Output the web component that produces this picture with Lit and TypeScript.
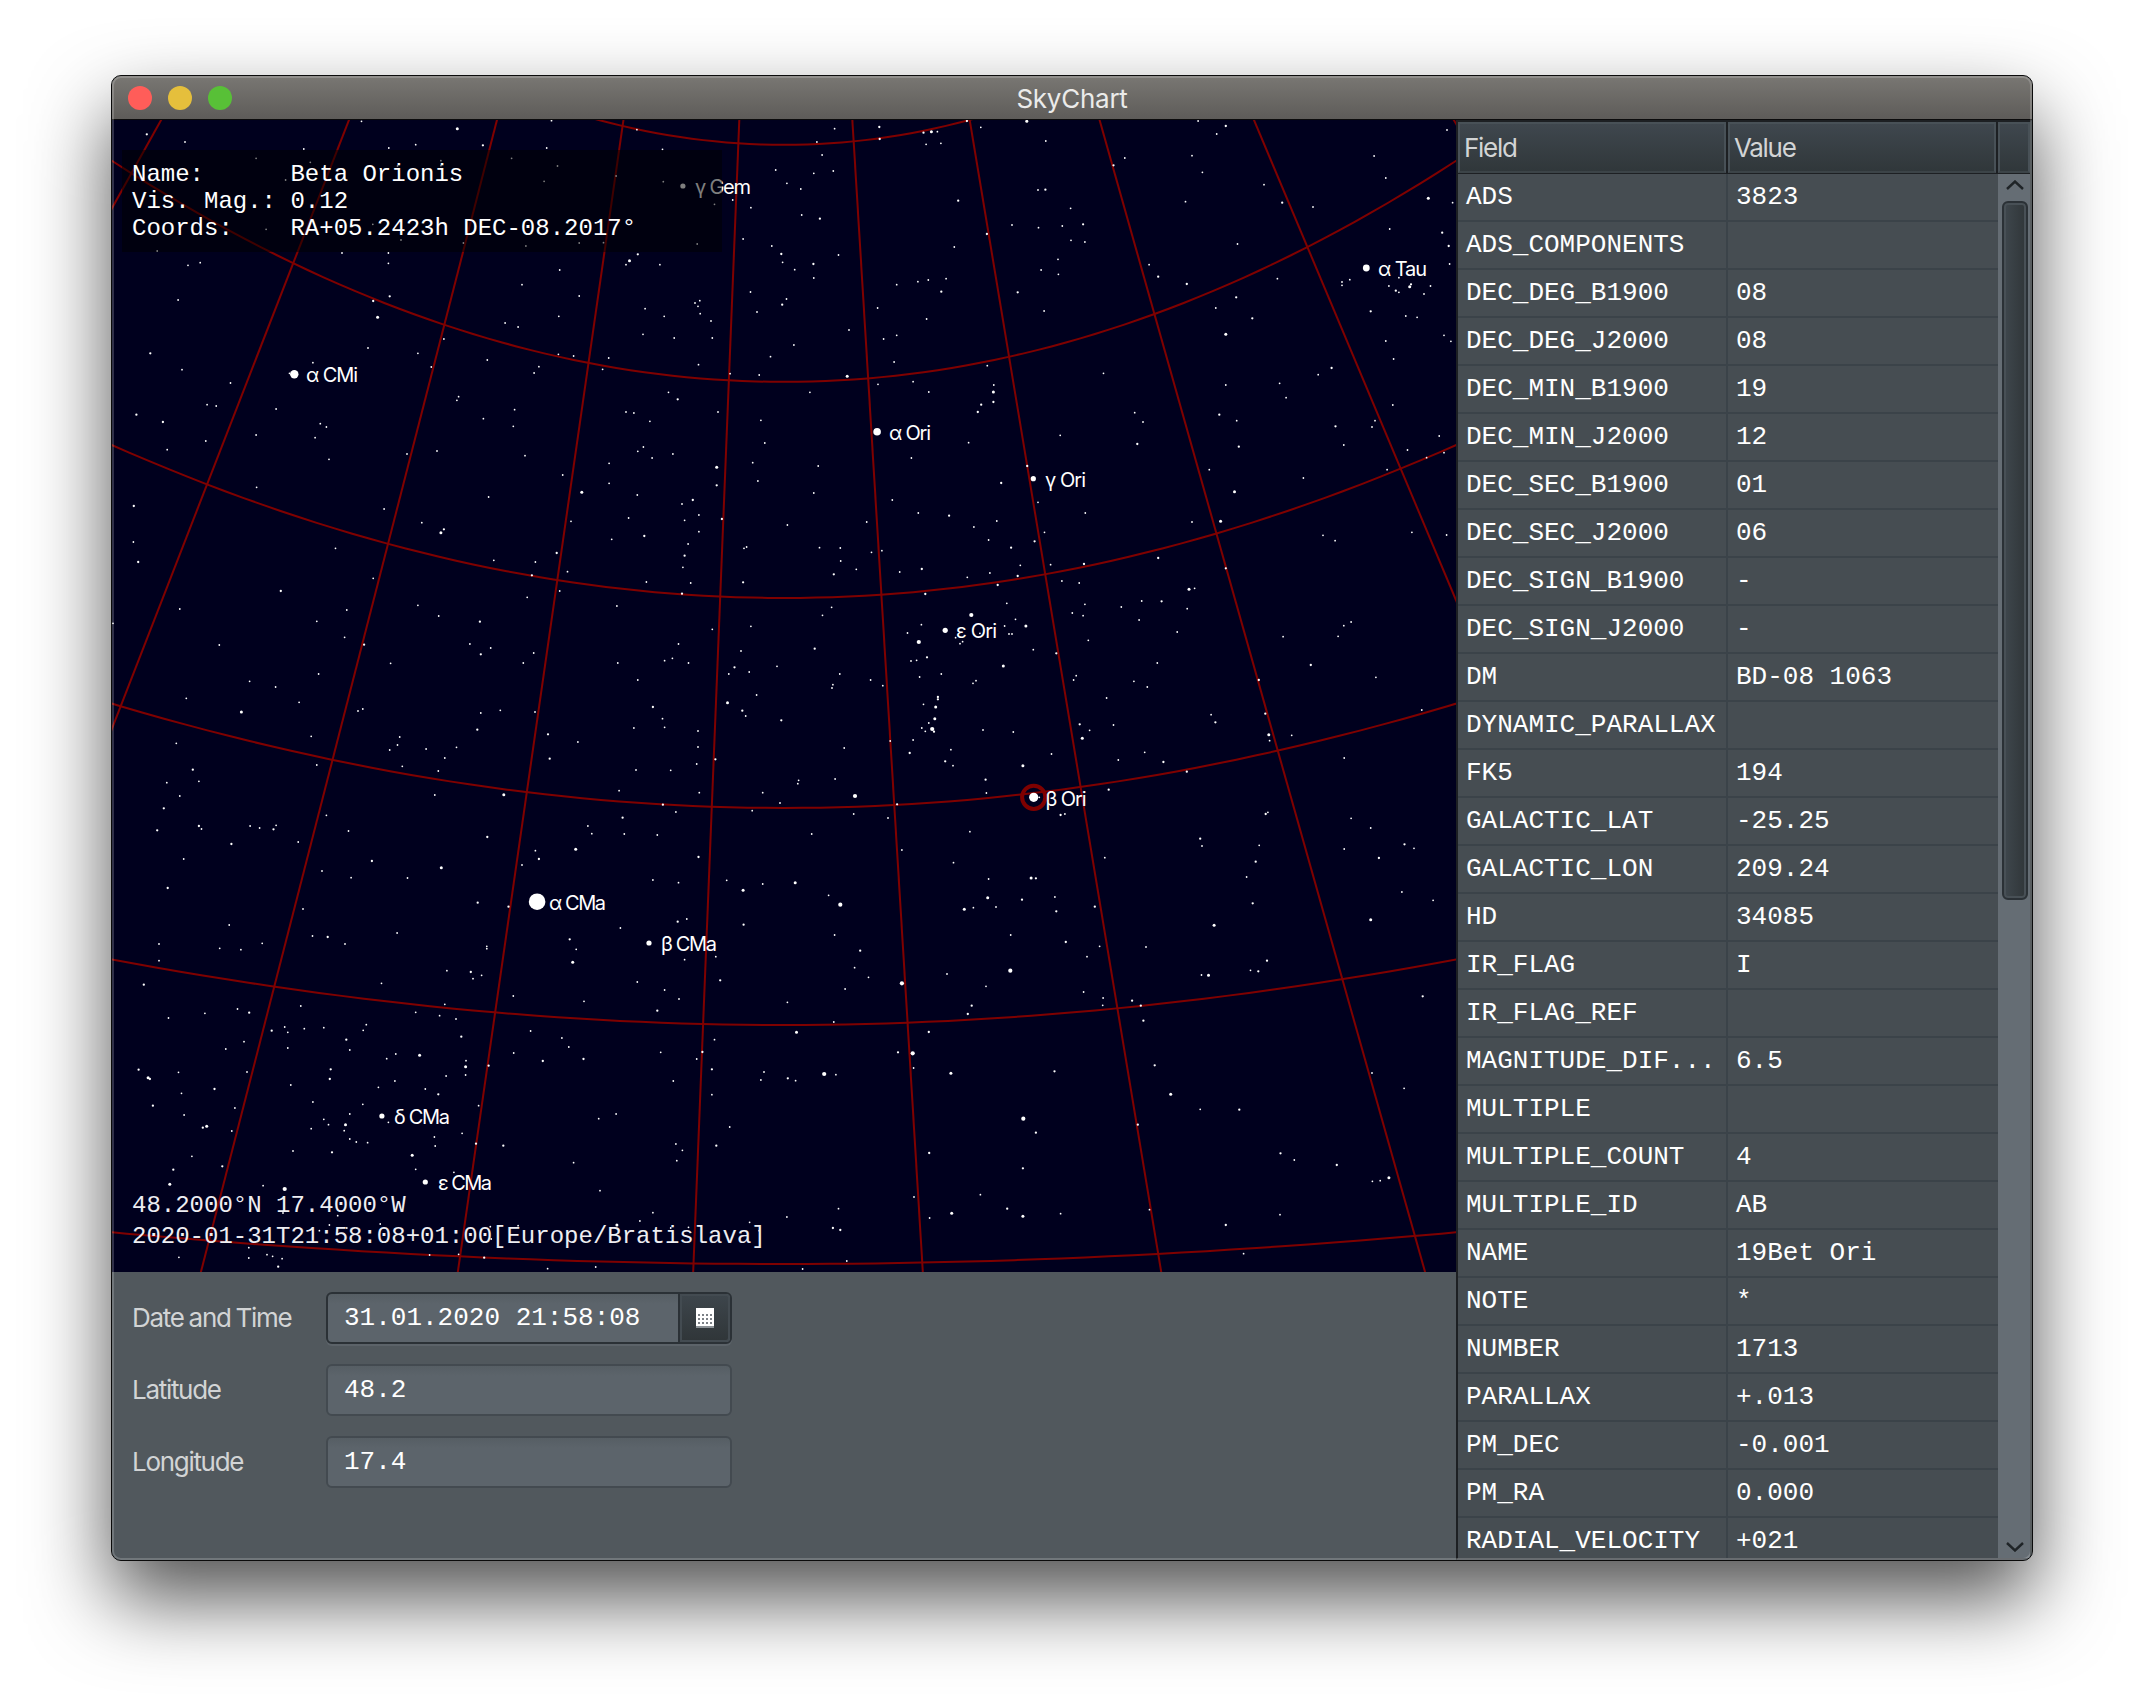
import { LitElement, html, svg, css } from "lit";
import { customElement } from "lit/decorators.js";

/* ---------- Sky data ---------- */

// Each sector lists stars as "x,y" or "x,y,size" in its own survey units.
const UNIT_X = 680 / 1568;
const UNIT_Y = 1 / 3;

const SECTORS: { x: number; y: number; stars: string }[] = [
  {
    x: -12,
    y: -60,
    stars: `108,223,1 196,246 603,184 824,206,2 1041,182 1238,209 470,267 666,264 728,254 883,256,1 1030,264 1297,268 360,295 485,307
    786,302 786,317 686,318 949,295 1055,318 1024,364 1190,348 1299,365 1558,330 428,360 1417,433 1459,420 1501,443 383,508 629,493
    694,540 838,549 982,558 1105,549 1161,548 1377,552 1483,537 1549,558 132,573 558,579 665,579 665,610 203,616 231,608 1240,583,1
    1221,602,2 1213,614 1291,614 1060,630 973,674 180,720 630,723,1 668,709,1 1105,708 1500,696 1515,756 1383,722 1372,729 1379,739
    1384,761 1257,746 1301,769 1058,769 1409,783 640,772,2 934,789 964,801 1252,823 1324,834 1412,834 793,837 618,864 733,880
    116,880,1 189,929 491,908 301,969 764,921 893,900 1012,920 1001,939 1057,883 1092,888 1173,894 1159,928 1380,914 1546,890
    1453,941 1520,945 1311,997 1332,1018,1 827,1010 823,1021 956,1049 884,1076 953,1099 247,1034 268,1038 406,1047 84,1064,1
    145,1086,1 244,1143 155,1169 360,1125 496,1133 508,1091 522,1101 528,1198 777,1173 708,1182 980,1187 1213,1056 1231,1059
    1268,1084 1425,1056 1524,1081 1533,1149 1253,1161 1240,1174 1321,1182 1273,1194 437,940`,
  },
  {
    x: 668,
    y: -60,
    stars: `126,206 229,201,1 85,246 230,237,1 97,285 123,333 78,340 16,370 48,387 50,465 92,476,1 331,218,1 349,215,2 363,215 337,253
    371,250 431,183,1 463,202 569,184,2 613,243 595,390 612,389,1 411,422,1 670,445 535,495 596,503 651,498 699,493,1 671,541
    703,546 477,522,1 402,561 3,582,1 6,607 34,629 77,612,1 135,585 78,654 15,717 5,734,1 269,674 318,665 342,660 383,656 372,695,1
    225,744 338,777 159,810 32,855 239,837 269,826 263,906 155,949,2 69,997 226,973 307,965 343,996 478,917 493,975 492,996,2
    492,1026,1 464,1034,1 456,1056,1 435,1148 303,1194 641,598 602,630 642,643 548,697,1 609,753 746,940 818,1058 837,1086
    824,1152,1 646,1126 795,294 769,316,1 964,183 1028,198,1 1007,222 950,287 974,337 1116,374 1158,428,1 935,425 1229,441
    1055,552 851,614 872,650,1 938,672,1 1147,656 1052,712,1 1005,744 1089,775,1 1028,823,2 1028,975 1013,1064,1 1053,1082
    1058,1160,1 1152,970 1167,1013 1241,944 1272,924,1 1281,1099,1 1300,1155 1296,666 1296,676 1314,659 1404,678 1420,692,1
    1427,697 1427,653 1452,680,2 1455,673,1 1485,702 1500,678 1362,754,1 1443,768 1469,772 1397,843 1531,826 1547,844 1415,897
    1413,1035 1372,1082 1365,1101 1520,1128 1447,1170 1491,1193 1531,1178 1538,210 1370,288 1397,354 1495,415,2 1551,428
    1406,507 1527,518,1 1542,558,1 1544,612`,
  },
  {
    x: -12,
    y: 340,
    stars: `78,138,1 77,246 88,306,1 30,490 184,447 361,82 275,555 345,664 199,715 326,756,2 405,681 459,727 417,393,1 543,265 655,147
    742,188 793,208,1 786,218,2 896,111 908,301 630,355 569,450 500,484 564,532 609,554,1 733,436 781,468 876,485,1 853,552
    878,583,1 901,564 670,610 504,642 595,753 606,747 487,829 500,915 691,831 686,855 668,870 697,919 752,867 795,894 822,862
    780,933 772,1005 931,1004,2 878,759 923,751 870,809,1 985,412 996,346,1 1004,306 1053,279,1 1078,335 1060,393 1000,579
    976,609 1086,184 1067,45 1111,97,2 1174,10 1174,70 1219,174 1239,105 1180,238 1255,228,1 1260,366 1192,438 1194,609 1240,660
    1275,741,1 1297,776 1302,802 1231,804 1302,602 1320,595 1357,609 1334,552 1342,132 1367,120,1 1381,165 1348,181 1381,215
    1356,252 1348,287,1 1344,322 1362,369 1342,401,1 1422,22,2 1422,76,1 1505,8 1517,63 1434,177,1 1485,265 1491,261 1483,367,1
    1412,508 1501,499 1478,573 1463,622,1 1450,642 1497,636 1561,619 1514,705 1447,728,2 1481,752,1 1489,768 1528,998 1504,1052
    1379,813 1379,861 1376,912 1382,998 1419,898,1 1316,931 1236,930 1197,992 1298,1034,1 1328,1056 1205,1073,1 1125,1098
    1134,1121 1209,1122 1285,1125 1097,1168,2 1004,1172 1012,1197,1 1380,1191,1 1033,823,1 1102,846 1037,896,1 1003,756
    176,850 214,929,1 228,964 154,968 184,1008 147,1045,1 132,1111,1 228,1098,1 234,1107 346,1098 368,1104 400,1108,1 406,1096
    457,1146 303,1152,1 522,1066 573,1113 193,1197 893,1131,1`,
  },
  {
    x: 668,
    y: 340,
    stars: `88,18 78,99 259,120 319,159 390,167,1 200,186 17,195 447,201 500,183 510,69,1 481,240 570,18,1 595,127 704,159 610,217
    587,244,1 533,263,1 91,263 139,264 140,303 211,277 235,272 176,328 124,343,1 276,336 327,327,1 554,316 624,314 701,312,1
    484,339 548,348,1 432,352 502,375,1 650,363 690,369 335,402,1 119,442 98,466 523,430 543,478 567,498,2 518,498 528,522 535,522
    441,465,3 326,494 294,519 320,546,3 405,533 415,551 421,545 703,433 674,459 699,467 711,541 787,441 834,423 880,424,1
    828,480 939,446 943,388,2 956,385 916,516 80,566,1 584,569 637,580,1 339,592,1 302,603 315,601 515,618,2 138,642 322,651
    372,642 209,660 122,674 120,684 237,677 452,662 445,670 683,647 677,660 816,664 847,681 870,609 364,711,1 364,718,1
    359,741,2 331,733 357,776,2 343,789 327,804 335,814 351,807,3 355,815,1 307,840 254,843 3,781,1 468,810 538,816 753,714
    691,793,1 714,811 697,835,2 769,795 148,864 299,879,1 394,869 381,904,1 399,917 626,882 560,917,2 780,900 841,877 884,906,1
    938,935,1 43,961 41,971 127,957 474,959,1 476,999 173,1008,3 270,1033,1 170,1062 249,1074 73,1122 281,1170 438,1115
    647,1065,1 657,1062 758,989,1 749,1193 598,1012 994,764 1004,787,1 1119,761,1 1127,824,2 1129,842 1180,826 1104,660,1
    1160,530 1224,615,1 1287,529 1300,497 1317,486 1374,652 1028,325,1 950,186 1016,184,2 990,29 1048,95,2 1207,54 1252,226
    1280,242 1457,217 1537,225 1400,29 872,294,1 1301,894 1480,750 1120,1062,1 1125,1057 1105,1156 969,1136,1 973,1158 1317,1075
    1362,1104 1301,1167 1440,1153,1 1462,1165 1381,1194,1 0,1029 461,520`,
  },
  {
    x: -12,
    y: 740,
    stars: `156,84,1 512,33 579,53 627,3,1 709,54 787,23,2 871,128,1 973,15 942,140,1 468,147 298,195 136,252 276,265 325,269 374,250
    490,228 525,231,1 565,252 685,219 892,259 892,266 136,302 101,374,1 242,460 317,447 344,458,1 158,474 463,438 649,370
    800,332 855,336,1 860,356 880,346 953,408 795,433 728,457 783,467 821,477 1116,424 1239,366 1302,390 1335,417 1285,452,1
    1083,238,1 1098,268 1090,307,2 1200,204 1332,185,1 1353,177 1275,60 1334,68 1445,61 1483,91,2 1528,72 1484,194,1
    1420,290 1348,299 1430,361,1 396,512,1 426,501 433,517 471,506 516,503 614,494 607,511 332,545 290,567 433,564 568,539,1
    576,570 682,582 661,596 737,586,2 833,530,1 844,602 843,620,2 843,645 896,617,1 954,579 993,513 1065,534 1081,561 1115,597,1
    1021,603,1 1293,577 1389,576,1 1376,597 1417,539 1411,628,1 1411,704 1531,636 1524,660 1322,663 89,629,1 111,653,2 115,657,1
    181,637 188,700 264,687,1 122,737,1 194,765 339,636 440,675 532,628,1 530,657,1 642,682 680,663 798,648 750,687 780,703,1
    311,744 491,726 606,733 576,762 516,778 527,794 566,794,2 563,812 487,806 576,837 591,846 617,848 237,803,1 246,799,2
    304,813 535,877,1 445,873 771,831 773,858 835,820 873,737 867,851,1 930,857,1 720,886,2 728,928 212,889 169,929,1 282,919,1
    161,973,2 376,977 426,987,3 665,787 1150,776 1190,762 1092,908 1452,801 1421,857,1 1328,852 1343,871 1330,902 1153,992
    1275,1058 1245,1083 1192,1095,2 1498,1087 1520,1112 900,1100 902,1137 964,1097 1316,1104 1357,1102 646,1092 548,1067
    422,1059 529,1095 506,1112 569,1104 816,937 343,1163 343,1194 385,1184 398,1189 420,1196 182,1192 411,1220,1 760,1185
    827,1183 886,1193,1 1032,1226 1143,1221`,
  },
  {
    x: 668,
    y: 740,
    stars: `400,8 481,57 579,54,2 590,55,1 35,68,2 112,106 139,134,3 479,113,2 558,119,1 634,111 637,154,1 498,141 425,148,2 446,143
    726,140,1 126,225 532,225 185,272,1 659,246,1 737,259 708,290 172,323 204,352 281,370,3 385,342 531,332,3 475,379 150,387
    17,427 700,396 745,414 744,436 442,437,1 433,462,1 124,486 38,517,2 343,516,1 812,422,1 832,437,1 838,482,1 272,577,1
    306,580,3 308,624 394,640,2 633,634,1 102,642,3 129,644 18,655,1 36,662 864,616,1 901,703,2 969,748 1059,749,1 561,776,3
    590,818,1 825,794,1 344,879,1 560,925,1 1097,5,1 1076,51 1090,130,1 1001,196,2 844,261 972,345 988,346,2 1085,331
    1103,334,1 1123,302,1 1434,96 1506,121 1362,179,2 1482,409,1 1365,639 1439,685 1154,880,1 1186,900 1284,915,1 1366,964
    1384,962 1404,953,2 1153,1064 1028,1095,1 1069,1181 852,1049 309,1011 462,1004 135,1046 16,1071 122,1104,1 139,1110,1
    345,1074 396,1060,2 524,1046,1 560,1069,2 647,1061 154,1203 52,1227`,
  },
];

const RADII = [0.88, 1.15, 1.5, 2.1];

interface NamedStar {
  label: string;
  x: number;
  y: number;
  r: number;
  tx: number;
  ty: number;
  width: number;
  selected?: boolean;
}

const NAMED: NamedStar[] = [
  { label: "α CMi", x: 182.3, y: 254.3, r: 4.2, tx: 194, ty: 262, width: 52 },
  { label: "γ Gem", x: 570.9, y: 66, r: 2.6, tx: 583, ty: 74, width: 56 },
  { label: "α Tau", x: 1254.3, y: 148, r: 3.4, tx: 1266, ty: 156, width: 49 },
  { label: "α Ori", x: 765.1, y: 311.7, r: 3.8, tx: 777, ty: 320, width: 42 },
  { label: "γ Ori", x: 921.3, y: 358.7, r: 2.6, tx: 933, ty: 367, width: 41 },
  { label: "ε Ori", x: 833.2, y: 510.3, r: 2.6, tx: 844, ty: 518, width: 41 },
  { label: "β Ori", x: 921.7, y: 677.3, r: 4.6, tx: 933.5, ty: 686, width: 41, selected: true },
  { label: "α CMa", x: 425.1, y: 781.7, r: 8.3, tx: 437, ty: 790, width: 57 },
  { label: "β CMa", x: 537, y: 823, r: 2.6, tx: 549, ty: 831, width: 56 },
  { label: "δ CMa", x: 269.9, y: 996, r: 2.6, tx: 282, ty: 1004, width: 56 },
  { label: "ε CMa", x: 313.3, y: 1062, r: 2.6, tx: 326, ty: 1070, width: 54 },
];

/* ---------- Gnomonic grid ---------- */

const W = 1344;
const H = 1152;
const FOCAL = 1200;
const CENTER_LAT = 35.33;
const FIRST_MERIDIAN = 3.96;
const rad = (deg: number) => (deg * Math.PI) / 180;

function project(lon: number, lat: number): [number, number] {
  const s0 = Math.sin(rad(CENTER_LAT));
  const c0 = Math.cos(rad(CENTER_LAT));
  const s = Math.sin(rad(lat));
  const c = Math.cos(rad(lat));
  const cl = Math.cos(rad(lon));
  const depth = s0 * s + c0 * c * cl;
  return [
    W / 2 - (FOCAL * c * Math.sin(rad(lon))) / depth,
    H / 2 - (FOCAL * (c0 * s - s0 * c * cl)) / depth,
  ];
}

function linePath(points: [number, number][]): string {
  return "M" + points.map(([x, y]) => `${x.toFixed(2)} ${y.toFixed(2)}`).join("L");
}

function gridPaths(): string[] {
  const paths: string[] = [];
  for (let lat = 10; lat <= 60; lat += 10) {
    const pts: [number, number][] = [];
    for (let lon = -56; lon <= 56; lon += 1) pts.push(project(lon, lat));
    paths.push(linePath(pts));
  }
  for (let k = -5; k <= 5; k++) {
    const lon = FIRST_MERIDIAN + 10 * k;
    paths.push(linePath([project(lon, 5), project(lon, 80)]));
  }
  return paths;
}

@customElement("sky-canvas")
class SkyCanvas extends LitElement {
  static styles = css`
    :host { display: block; position: relative; height: 1152px; background: #00001e; overflow: hidden; }
    .sky { display: block; }
    .grid { fill: none; stroke: #7f0000; stroke-width: 2; }
    .ring { fill: none; stroke: #7f0000; stroke-width: 4; }
    .star { fill: #fff; }
    .label { fill: #fff; font: 20px Inter, "Liberation Sans", sans-serif; }
    .info, .place {
      position: absolute; margin: 0; white-space: pre; color: #fff;
      font: 24px/27px "Liberation Mono", monospace;
    }
    .info { left: 10px; top: 30px; width: 600px; height: 102px; box-sizing: border-box; padding: 11px 10px; background: rgba(0, 0, 0, 0.5); }
    .place { left: 20px; top: 1070px; line-height: 31px; color: #eeeef2; }
  `;

  render() {
    const stars = SECTORS.flatMap((s) =>
      s.stars.trim().split(/\s+/).map((entry) => {
        const [x, y, size = 0] = entry.split(",").map(Number);
        return { x: s.x + x * UNIT_X, y: s.y + y * UNIT_Y, r: RADII[size] };
      })
    );
    return html`
      <svg class="sky" width=${W} height=${H} viewBox="0 0 ${W} ${H}">
        ${gridPaths().map((d) => svg`<path class="grid" d=${d}></path>`)}
        ${stars.map((s) => svg`<circle class="star" cx=${s.x.toFixed(1)} cy=${s.y.toFixed(1)} r=${s.r}></circle>`)}
        ${NAMED.map(
          (n) => svg`
            <circle class="star" cx=${n.x} cy=${n.y} r=${n.r}></circle>
            ${n.selected ? svg`<circle class="ring" cx=${n.x} cy=${n.y} r="11.6"></circle>` : ""}
            <text class="label" x=${n.tx} y=${n.ty} textLength=${n.width}>${n.label}</text>`
        )}
      </svg>
      <pre class="info">Name:      Beta Orionis
Vis. Mag.: 0.12
Coords:    RA+05.2423h DEC-08.2017°</pre>
      <pre class="place">48.2000°N 17.4000°W
2020-01-31T21:58:08+01:00[Europe/Bratislava]</pre>
    `;
  }
}

/* ---------- Form ---------- */

@customElement("observer-form")
class ObserverForm extends LitElement {
  static styles = css`
    :host {
      display: grid; grid-template-columns: 194px 406px; grid-auto-rows: 52px; row-gap: 20px;
      align-content: start; align-items: center; padding: 20px; background: #51585d;
      font: 26px/52px Inter, "Liberation Sans", sans-serif; color: #d2d4d5;
    }
    .caption { letter-spacing: -0.05em; }
    .wide { word-spacing: -1px; }
    .field {
      box-sizing: border-box; height: 52px; border: 2px solid #434a50; border-radius: 6px; padding-left: 16px;
      background: linear-gradient(#565e64, #5c646b 10px); color: #fff;
      font: 26px/49px "Liberation Mono", monospace; white-space: pre;
    }
    .date { display: flex; border-color: #2b3136; box-shadow: 0 2px 0 #5c6369; }
    .value { flex: 1; }
    .pick {
      display: flex; align-items: center; justify-content: center; box-sizing: border-box; width: 50px; margin-left: 2px;
      border: 2px solid #434b51; box-shadow: -2px 0 0 #2b3136; border-radius: 0 4px 4px 0;
      background: linear-gradient(#3d454b, #303639);
    }
  `;

  render() {
    return html`
      <span class="caption wide">Date and Time</span>
      <div class="field date">
        <span class="value">31.01.2020 21:58:08</span>
        <span class="pick">
          <svg width="18" height="20" viewBox="0 0 18 20">
            <rect y="2" width="18" height="18" fill="#8b9196"></rect>
            <rect width="18" height="18" fill="#fff"></rect>
            ${[2, 6, 10, 14].flatMap((x) =>
              [6, 10, 14].map((y) => svg`<rect x=${x} y=${y} width="2" height="2" fill="#7b8086"></rect>`)
            )}
          </svg>
        </span>
      </div>
      <span class="caption">Latitude</span>
      <div class="field">48.2</div>
      <span class="caption">Longitude</span>
      <div class="field">17.4</div>
    `;
  }
}

/* ---------- Table ---------- */

const ROWS: [string, string][] = [
  ["ADS", "3823"], ["ADS_COMPONENTS", ""], ["DEC_DEG_B1900", "08"], ["DEC_DEG_J2000", "08"],
  ["DEC_MIN_B1900", "19"], ["DEC_MIN_J2000", "12"], ["DEC_SEC_B1900", "01"], ["DEC_SEC_J2000", "06"],
  ["DEC_SIGN_B1900", "-"], ["DEC_SIGN_J2000", "-"], ["DM", "BD-08 1063"], ["DYNAMIC_PARALLAX", ""],
  ["FK5", "194"], ["GALACTIC_LAT", "-25.25"], ["GALACTIC_LON", "209.24"], ["HD", "34085"],
  ["IR_FLAG", "I"], ["IR_FLAG_REF", ""], ["MAGNITUDE_DIF...", "6.5"], ["MULTIPLE", ""],
  ["MULTIPLE_COUNT", "4"], ["MULTIPLE_ID", "AB"], ["NAME", "19Bet Ori"], ["NOTE", "*"],
  ["NUMBER", "1713"], ["PARALLAX", "+.013"], ["PM_DEC", "-0.001"], ["PM_RA", "0.000"],
  ["RADIAL_VELOCITY", "+021"],
];

@customElement("field-table")
class FieldTable extends LitElement {
  static styles = css`
    :host {
      display: flex; flex-direction: column; box-sizing: border-box; height: 1440px;
      border: 2px solid #1d2023; border-bottom-color: #454b4f; border-right-color: #33393c; background: #464d52; overflow: hidden;
    }
    .head { display: grid; grid-template-columns: 268px 268px 32px; column-gap: 2px; height: 50px; border-bottom: 2px solid #1d2023; background: #1d2023; flex: none; }
    .th {
      box-sizing: border-box; border: 2px solid #485157; border-bottom-color: #3c4448; padding-left: 4px;
      background: linear-gradient(#3f474e, #30373a); color: #d2d4d5;
      font: 26px/47px Inter, "Liberation Sans", sans-serif; letter-spacing: -0.05em;
    }
    .body { display: flex; flex: 1; min-height: 0; }
    .rows { width: 540px; }
    .row { display: grid; grid-template-columns: 270px 270px; height: 48px; box-sizing: border-box; border-bottom: 2px solid #3b4349; }
    .cell {
      box-sizing: border-box; height: 46px; padding-left: 8px; color: #fff; white-space: pre;
      font: 26px/46px "Liberation Mono", monospace;
    }
    .key { border-right: 2px solid #3b4349; }
    .bar { display: flex; flex-direction: column; align-items: center; width: 32px; box-sizing: border-box; background: #656d74; padding: 6px 0 6px; }
    .thumb {
      box-sizing: border-box; width: 26px; height: 699px; margin: 5px 0 auto 2px; border: 2px solid #2b3136; border-radius: 6px;
      box-shadow: inset 0 0 0 2px #485056; background: linear-gradient(90deg, #3f474d, #303639);
    }
    .chev { fill: none; stroke: #1f2427; stroke-width: 2.4; margin-left: 2px; }
  `;

  render() {
    return html`
      <div class="head">
        <div class="th">Field</div>
        <div class="th">Value</div>
        <div class="th"></div>
      </div>
      <div class="body">
        <div class="rows">
          ${ROWS.map(
            ([k, v]) => html`<div class="row"><div class="cell key">${k}</div><div class="cell">${v}</div></div>`
          )}
        </div>
        <div class="bar">
          <svg class="chev" width="18" height="16" viewBox="0 0 18 16"><path d="M1 9L9 1.5L17 9"></path></svg>
          <div class="thumb"></div>
          <svg class="chev" width="18" height="10" viewBox="0 0 18 10"><path d="M1 1L9 8.5L17 1"></path></svg>
        </div>
      </div>
    `;
  }
}

/* ---------- Window ---------- */

@customElement("app-root")
class AppRoot extends LitElement {
  static styles = css`
    :host { display: block; box-sizing: border-box; width: 2144px; height: 1708px; padding: 75px 0 0 111px; background: #fff; overflow: hidden; }
    .window {
      position: relative; box-sizing: border-box; width: 1922px; height: 1486px; border: 1px solid #0b0b0b; border-radius: 10px;
      overflow: hidden; background: #51585d; box-shadow: 0 38px 80px rgba(0, 0, 0, 0.68);
    }
    .glass { position: absolute; inset: 0; border-radius: 9px; pointer-events: none; box-shadow: inset 0 0 0 2px rgba(255, 255, 255, 0.19); }
    .title {
      display: grid; grid-template-columns: 200px 1fr 200px; align-items: center; box-sizing: border-box; height: 44px;
      border-bottom: 1px solid #0c0c0c; background: linear-gradient(#797773, #5e5c59);
    }
    .lights { display: flex; gap: 16px; padding-left: 16px; }
    .dot { width: 24px; height: 24px; border-radius: 50%; }
    .close { background: #ff5d59; }
    .min { background: #e5bf3c; }
    .max { background: #58c037; }
    .name { text-align: center; color: #ebebea; font: 26px/41px Inter, "Liberation Sans", sans-serif; letter-spacing: -0.01em; padding-top: 2px; }
    .main { display: grid; grid-template-columns: 1344px 576px; height: 1440px; }
    .left { display: flex; flex-direction: column; }
    .grow { flex: 1; }
  `;

  render() {
    return html`
      <div class="window">
        <div class="title">
          <div class="lights">
            <span class="dot close"></span><span class="dot min"></span><span class="dot max"></span>
          </div>
          <div class="name">SkyChart</div>
        </div>
        <div class="main">
          <div class="left">
            <sky-canvas></sky-canvas>
            <observer-form class="grow"></observer-form>
          </div>
          <field-table></field-table>
        </div>
        <div class="glass"></div>
      </div>
    `;
  }
}
